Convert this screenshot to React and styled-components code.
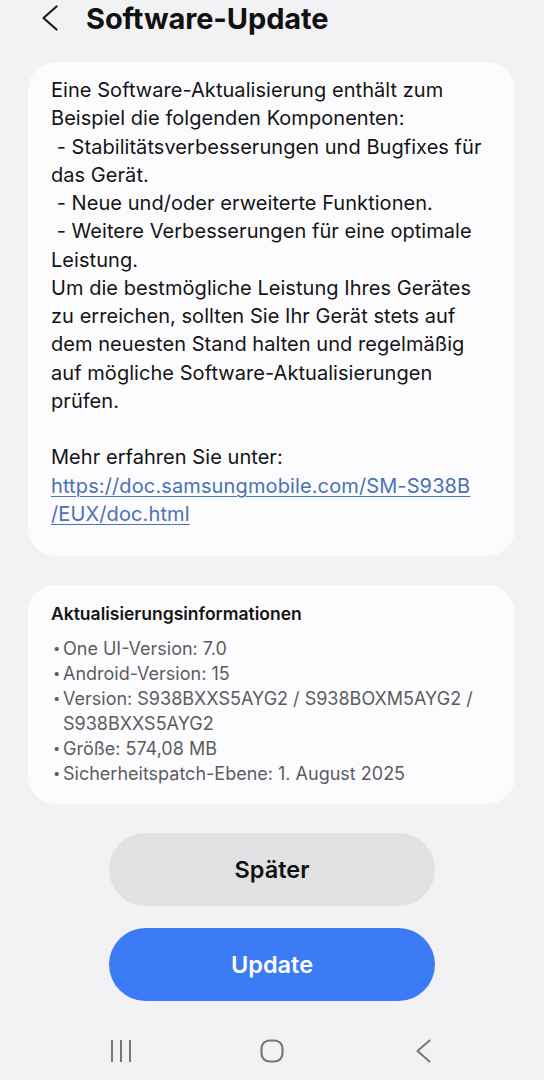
import React from "react";
import styled, { createGlobalStyle } from "styled-components";

const GlobalStyle = createGlobalStyle`
  html, body {
    margin: 0;
    padding: 0;
    background: #f2f2f4;
  }
  body {
    font-family: Inter, "Noto Sans", "Liberation Sans", sans-serif;
    -webkit-font-smoothing: antialiased;
  }
`;

const Screen = styled.div`
  width: 544px;
  height: 1080px;
  display: flex;
  flex-direction: column;
  background: #f2f2f4;
  overflow: hidden;
`;

const Header = styled.header`
  height: 36px;
  display: flex;
  align-items: center;
  gap: 28px;
  padding-left: 42px;
`;

const BackButton = styled.button`
  border: 0;
  background: none;
  padding: 0;
  display: flex;
  width: 16px;
  height: 26px;
  color: #1a1a1a;
`;

const Title = styled.h1`
  margin: 0;
  font-size: 29px;
  font-weight: 700;
  color: #111;
  letter-spacing: -0.1px;
`;

const Card = styled.section`
  margin: ${(p) => p.$top || 0}px 29px 0 28px;
  background: #fcfcfe;
  border-radius: 28px;
  padding: ${(p) => p.$pad};
`;

const Body = styled.div`
  font-size: 20px;
  line-height: 28.25px;
  color: #141414;
  letter-spacing: 0.05px;
`;

const Line = styled.div`
  white-space: pre;
  min-height: 28.25px;
`;

const Link = styled.a`
  color: #4a72b5;
  text-decoration: underline;
  text-underline-offset: 3px;
  text-decoration-thickness: 1px;
  display: block;
  letter-spacing: 0.12px;
`;

const InfoTitle = styled.h2`
  margin: 0 0 10px;
  font-size: 17.5px;
  line-height: 25px;
  font-weight: 600;
  color: #151515;
`;

const InfoList = styled.ul`
  margin: 0;
  padding: 0;
  list-style: none;
  font-size: 18px;
  line-height: 25px;
  color: #5c5c5e;
`;

const InfoItem = styled.li`
  display: grid;
  grid-template-columns: 12px 1fr;
`;

const Bullet = styled.span`
  font-size: 13px;
  padding-left: 2px;
`;

const Actions = styled.div`
  margin-top: 29px;
  display: flex;
  flex-direction: column;
  align-items: center;
  gap: 22px;
`;

const PillButton = styled.button`
  width: 326px;
  height: 73px;
  border: 0;
  border-radius: 37px;
  font-family: inherit;
  font-size: 23.5px;
  font-weight: 600;
  background: ${(p) => (p.$primary ? "#3b7cf6" : "#e1e1e3")};
  color: ${(p) => (p.$primary ? "#ffffff" : "#111111")};
`;

const NavBar = styled.nav`
  margin-top: 26px;
  height: 48px;
  display: grid;
  grid-template-columns: repeat(3, 40px);
  justify-content: center;
  column-gap: 111px;
  align-items: center;
  justify-items: center;
  color: #77777a;
`;

const ChevronLeft = ({ w, h, sw }) => (
  <svg width={w} height={h} viewBox={`0 0 ${w} ${h}`} fill="none">
    <path
      d={`M${w - 1.5} 1.5 L1.5 ${h / 2} L${w - 1.5} ${h - 1.5}`}
      stroke="currentColor"
      strokeWidth={sw}
      strokeLinecap="round"
      strokeLinejoin="round"
    />
  </svg>
);

const RecentsIcon = () => (
  <svg width="22" height="24" viewBox="0 0 22 24" fill="none">
    <path d="M2 1v22M11 1v22M20 1v22" stroke="currentColor" strokeWidth="2" />
  </svg>
);

const HomeIcon = () => (
  <svg width="24" height="24" viewBox="0 0 24 24" fill="none">
    <rect x="1.5" y="1.5" width="21" height="21" rx="8" stroke="currentColor" strokeWidth="2.2" />
  </svg>
);

const bodyLines = [
  "Eine Software-Aktualisierung enthält zum",
  "Beispiel die folgenden Komponenten:",
  " - Stabilitätsverbesserungen und Bugfixes für",
  "das Gerät.",
  " - Neue und/oder erweiterte Funktionen.",
  " - Weitere Verbesserungen für eine optimale",
  "Leistung.",
  "Um die bestmögliche Leistung Ihres Gerätes",
  "zu erreichen, sollten Sie Ihr Gerät stets auf",
  "dem neuesten Stand halten und regelmäßig",
  "auf mögliche Software-Aktualisierungen",
  "prüfen.",
  "",
  "Mehr erfahren Sie unter:",
];

const infoItems = [
  "One UI-Version: 7.0",
  "Android-Version: 15",
  "Version: S938BXXS5AYG2 / S938BOXM5AYG2 / S938BXXS5AYG2",
  "Größe: 574,08 MB",
  "Sicherheitspatch-Ebene: 1. August 2025",
];

export default function App() {
  return (
    <Screen>
      <GlobalStyle />
      <Header>
        <BackButton aria-label="Zurück">
          <ChevronLeft w={16} h={26} sw={2.2} />
        </BackButton>
        <Title>Software-Update</Title>
      </Header>

      <Card $top={26} $pad="14px 23px 28px">
        <Body>
          {bodyLines.map((l, i) => (
            <Line key={i}>{l}</Line>
          ))}
          <Link href="#">
            https://doc.samsungmobile.com/SM-S938B
            <br />
            /EUX/doc.html
          </Link>
        </Body>
      </Card>

      <Card $top={29} $pad="16px 40px 18px 23px">
        <InfoTitle>Aktualisierungsinformationen</InfoTitle>
        <InfoList>
          {infoItems.map((t) => (
            <InfoItem key={t}>
              <Bullet>•</Bullet>
              <span>{t}</span>
            </InfoItem>
          ))}
        </InfoList>
      </Card>

      <Actions>
        <PillButton>Später</PillButton>
        <PillButton $primary>Update</PillButton>
      </Actions>

      <NavBar>
        <RecentsIcon />
        <HomeIcon />
        <ChevronLeft w={15} h={24} sw={2} />
      </NavBar>
    </Screen>
  );
}
